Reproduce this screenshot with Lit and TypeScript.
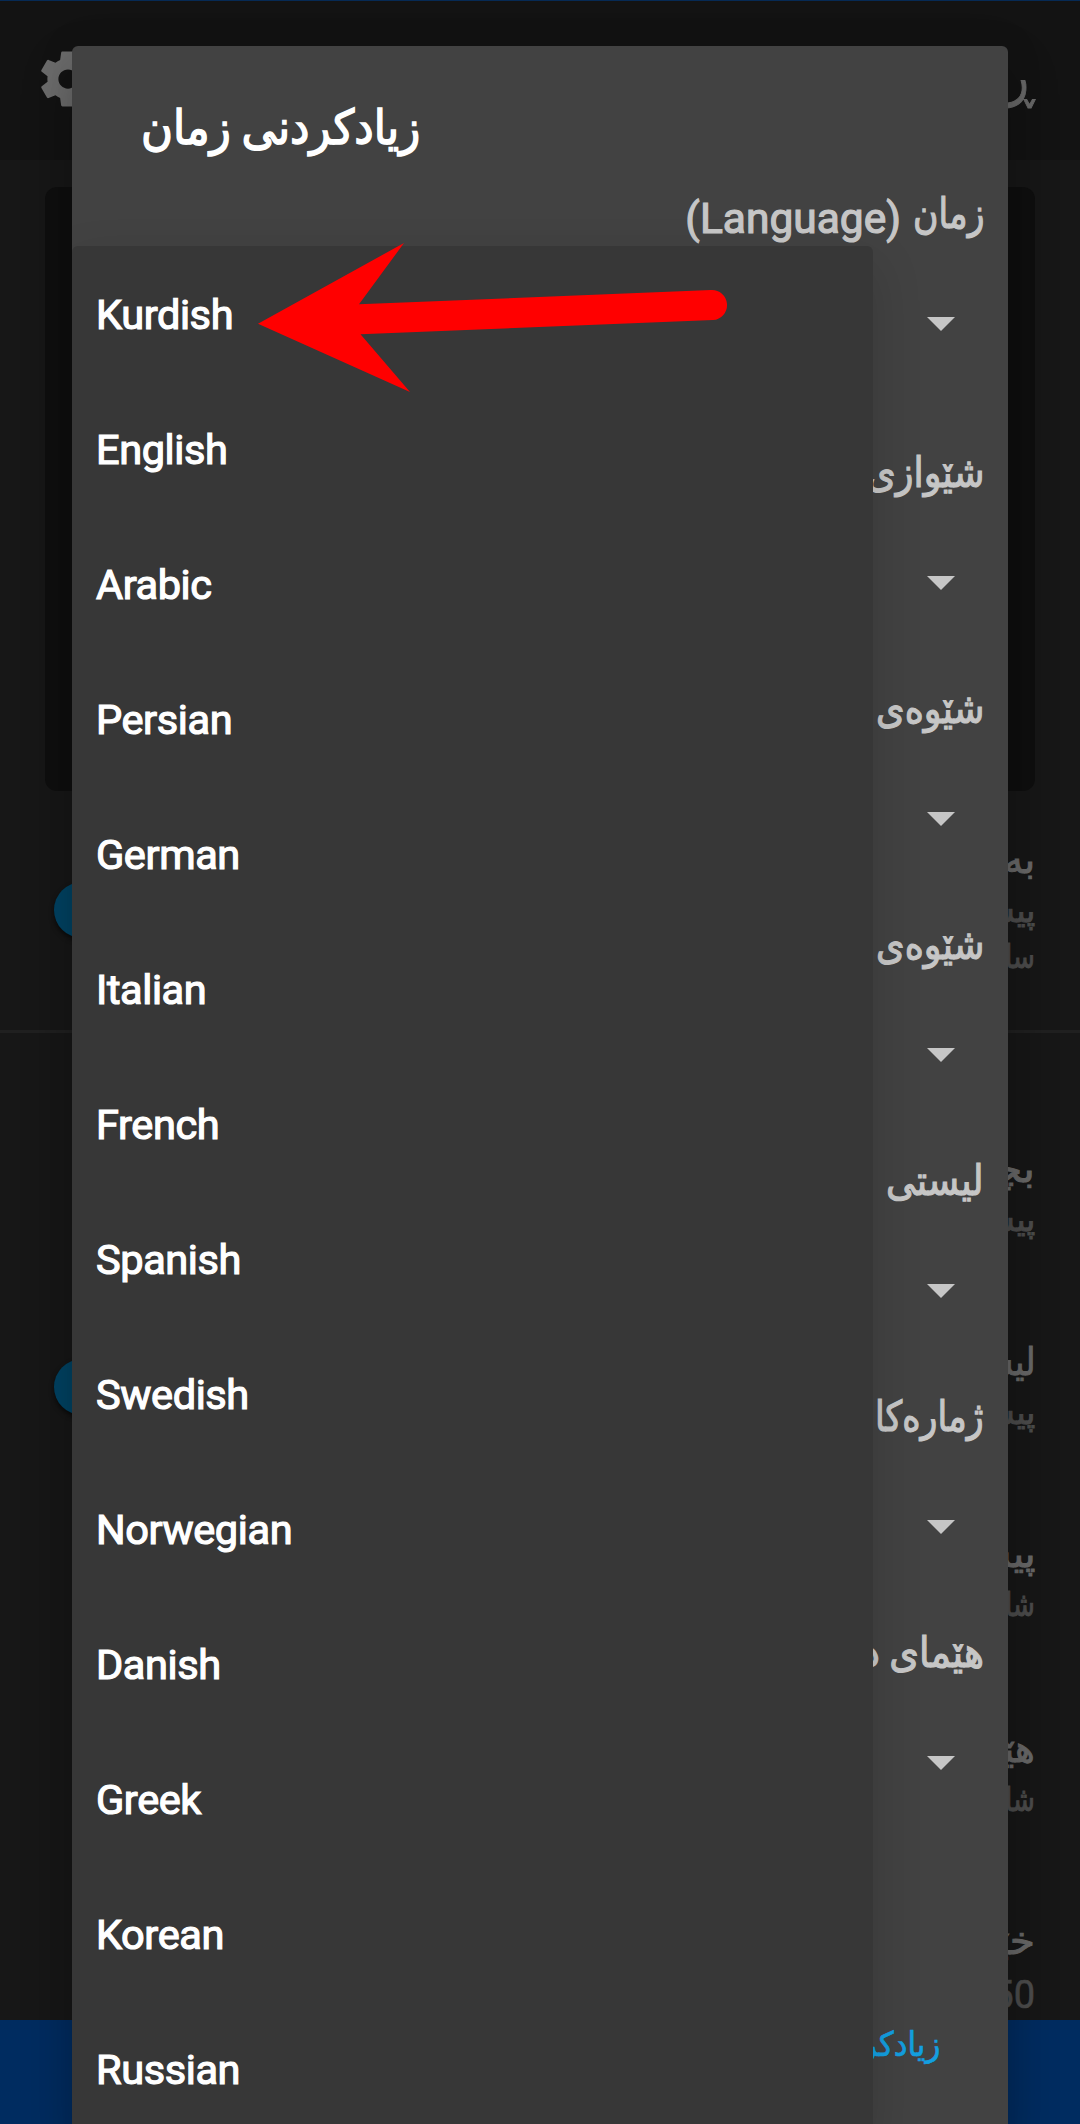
import { LitElement, html, css } from "lit";
import { customElement } from "lit/decorators.js";

const LANGUAGES = ["Kurdish", "English", "Arabic", "Persian", "German", "Italian", "French", "Spanish", "Swedish", "Norwegian", "Danish", "Greek", "Korean", "Russian"];

// Each label carries the width its text is set to, in pixels.
const FIELDS: [string, number][] = [["شێوازی", 117], ["شێوەی", 108], ["شێوەی", 108], ["لیستی", 98], ["ژمارەکا", 109], ["هێمای د", 121]];

@customElement("app-root")
export class AppRoot extends LitElement {
  static styles = css`
    :host { display: block; position: relative; width: 1080px; height: 2124px; overflow: hidden; background: #171717; font-family: Roboto, "DejaVu Sans", sans-serif; }
    * { box-sizing: border-box; }
    .page { height: 2124px; display: flex; flex-direction: column; direction: rtl; color: #686868; }
    .bar { height: 160px; border-top: 1px solid #062a55; background: #131313; display: flex; justify-content: space-between; align-items: flex-start; padding: 45px 46px 0 35px; flex: none; }
    .bar h1 { margin: 0; font-size: 54px; line-height: 62px; font-weight: 400; -webkit-text-stroke: 1px; }
    .gear { width: 66px; height: 66px; fill: #6c6c6c; }
    .card { flex: none; height: 604px; margin: 27px 45px 0; border-radius: 12px; background: #0f0f0f; }
    .pref { flex: none; display: flex; justify-content: space-between; align-items: flex-start; padding: 0 45px 0 54px; -webkit-text-stroke: 1px; }
    .t { font-size: 38px; line-height: 50px; }
    .s { font-size: 33px; line-height: 46px; color: #4c4c4c; padding-top: 3px; }
    .s + .s { padding-top: 0; }
    .num { font-size: 38px; padding-top: 6px; -webkit-text-stroke: .6px; }
    .p1 { height: 242px; padding-top: 44px; border-bottom: 3px solid #202020; }
    .p2 { height: 211px; padding-top: 111px; }
    .p3 { height: 192px; padding-top: 93px; }
    .p4 { height: 192px; padding-top: 93px; }
    .p5 { height: 193px; padding-top: 96px; }
    .p6 { height: 199px; padding-top: 95px; }
    .knob { width: 56px; height: 56px; border-radius: 50%; background: #004363; box-shadow: 0 3px 5px #0008; margin-top: 47px; }
    .p3 .knob { margin-top: 22px; }
    .foot { flex: 1; background: #002c60; }
    .fit { display: inline-block; white-space: nowrap; transform-origin: right; }
    .dialog { position: absolute; left: 72px; top: 46px; width: 936px; height: 2100px; border-radius: 6px; background: #424242; box-shadow: 0 24px 50px rgba(0,0,0,.25), 0 0 40px rgba(0,0,0,.08); direction: rtl; padding: 0 24px; color: #c6c6c6; }
    .title { margin: 0; height: 130px; padding: 52px 0 0 45px; direction: ltr; text-align: left; color: #fff; font-size: 48px; line-height: 60px; font-weight: 400; -webkit-text-stroke: 1.5px; }
    .title .fit { transform-origin: left; }
    .field { height: 236px; padding-top: 8px; font-size: 42px; line-height: 60px; -webkit-text-stroke: 1.2px; }
    .field.first { height: 259px; }
    .label { height: 60px; display: flex; }
    .latin { padding: 5px 12px 0 0; font-size: 42.5px; }
    .word { width: 71px; }
    .tri { display: block; width: 28px; height: 14px; margin: 73px 29px 0 0; fill: #c6c6c6; }
    .action { color: #139fe0; font-size: 34px; line-height: 50px; padding-right: 44px; margin-top: 168px; -webkit-text-stroke: .7px; }
    .popup { position: absolute; left: 72px; top: 246px; width: 801px; height: 1890px; padding: 1px 24px 0; border-radius: 6px; background: #373737; box-shadow: 0 20px 50px rgba(0,0,0,.15); clip-path: inset(-80px -135px 0 0); color: #fff; }
    .item { height: 135px; font-size: 41.5px; line-height: 135px; letter-spacing: -.4px; -webkit-text-stroke: 1.2px #fff; }
    .arrow { position: absolute; left: 250px; top: 236px; width: 490px; height: 166px; fill: #f00; }
  `;

  firstUpdated() {
    this.renderRoot.querySelectorAll<HTMLElement>(".fit").forEach(el => {
      el.style.transform = `scaleX(${Number(el.dataset.width) / el.offsetWidth})`;
    });
  }

  private fit(text: string, width: number) {
    return html`<span class="fit" data-width=${width}>${text}</span>`;
  }

  private tri() {
    return html`<svg class="tri" viewBox="0 0 28 14"><path d="M0 0H28L14 14Z"/></svg>`;
  }

  private pref(cls: string, title: [string, number], subs: [string, number][], knob = false) {
    return html`<div class="pref ${cls}"><div><div class="t">${this.fit(...title)}</div>${subs.map(s => html`<div class="s ${s[0] === "50" ? "num" : ""}">${this.fit(...s)}</div>`)}</div>${knob ? html`<div class="knob"></div>` : ""}</div>`;
  }

  render() {
    return html`
      <div class="page">
        <div class="bar"><h1>${this.fit("ڕێک", 78)}</h1>
          <svg class="gear" viewBox="0 0 24 24"><path d="M19.43 12.98c.04-.32.07-.64.07-.98s-.03-.66-.07-.98l2.11-1.65c.19-.15.24-.42.12-.64l-2-3.46c-.12-.22-.39-.3-.61-.22l-2.49 1c-.52-.4-1.08-.73-1.69-.98l-.38-2.65C14.46 2.18 14.25 2 14 2h-4c-.25 0-.46.18-.49.42l-.38 2.65c-.61.25-1.17.59-1.69.98l-2.49-1c-.23-.09-.49 0-.61.22l-2 3.46c-.13.22-.07.49.12.64l2.11 1.65c-.04.32-.07.65-.07.98s.03.66.07.98l-2.11 1.65c-.19.15-.24.42-.12.64l2 3.46c.12.22.39.3.61.22l2.49-1c.52.4 1.08.73 1.69.98l.38 2.65c.03.24.24.42.49.42h4c.25 0 .46-.18.49-.42l.38-2.65c.61-.25 1.17-.59 1.69-.98l2.49 1c.23.09.49 0 .61-.22l2-3.46c.12-.22.07-.49-.12-.64l-2.11-1.65zM12 15.5c-1.93 0-3.5-1.57-3.5-3.5s1.57-3.5 3.5-3.5 3.5 1.57 3.5 3.5-1.57 3.5-3.5 3.5z"/></svg>
        </div>
        <div class="card"></div>
        ${this.pref("p1", ["به", 31], [["پیش", 60], ["سا", 30]], true)}
        ${this.pref("p2", ["بچو", 60], [["پیش", 60]])}
        ${this.pref("p3", ["لیس", 64], [["پیش", 60]], true)}
        ${this.pref("p4", ["پیش", 72], [["شا", 30]])}
        ${this.pref("p5", ["هێم", 56], [["شا", 30]])}
        ${this.pref("p6", ["خێر", 60], [["50", 43]])}
        <div class="foot"></div>
      </div>
      <div class="dialog">
        <h2 class="title" lang="ckb">${this.fit("زیادکردنی زمان", 279)}</h2>
        <div class="field first"><div class="label"><span class="word">${this.fit("زمان", 71)}</span><span class="latin" dir="ltr">(Language)</span></div>${this.tri()}</div>
        ${FIELDS.map(f => html`<div class="field"><div class="label">${this.fit(...f)}</div>${this.tri()}</div>`)}
        <div class="action">${this.fit("زیادکر", 78)}</div>
      </div>
      <div class="popup">${LANGUAGES.map(l => html`<div class="item">${l}</div>`)}</div>
      <svg class="arrow" viewBox="250 236 490 166"><path d="M258 323.7L404 243L359 304.3L711 290A15 15 0 0 1 713 320L360.5 334.3L410 392Z"/></svg>
    `;
  }
}
